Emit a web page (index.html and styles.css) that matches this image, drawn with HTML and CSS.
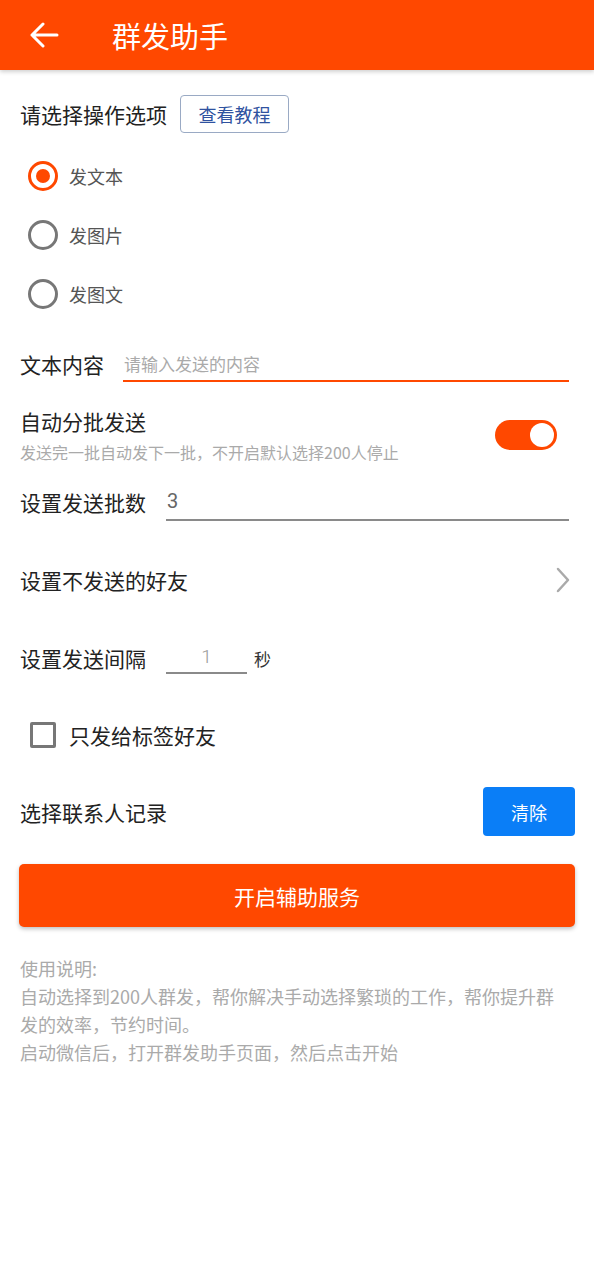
FILE: index.html
```html
<!DOCTYPE html>
<html lang="zh">
<head>
<meta charset="utf-8">
<link rel="stylesheet" href="styles.css">
</head>
<body>
<div class="header">
  <svg class="back" width="30" height="26" viewBox="0 0 30 26"><path d="M3 13 H28 M14 2 L3 13 L14 24" fill="none" stroke="#fff" stroke-width="3" stroke-linecap="round" stroke-linejoin="round"/></svg>
  <div class="title">群发助手</div>
</div>
<div class="content">
  <div class="row head-row">
    <div class="label">请选择操作选项</div>
    <div class="outline-btn">查看教程</div>
  </div>
  <div class="radios">
    <div class="radio-row"><span class="radio on"></span><span class="radio-label">发文本</span></div>
    <div class="radio-row"><span class="radio"></span><span class="radio-label">发图片</span></div>
    <div class="radio-row"><span class="radio"></span><span class="radio-label">发图文</span></div>
  </div>
  <div class="row text-row">
    <div class="label">文本内容</div>
    <div class="input focus"><span class="placeholder">请输入发送的内容</span></div>
  </div>
  <div class="batch-row">
    <div class="batch-text">
      <div class="label lh30">自动分批发送</div>
      <div class="sub">发送完一批自动发下一批，不开启默认选择200人停止</div>
    </div>
    <div class="toggle"><span class="thumb"></span></div>
  </div>
  <div class="row count-row">
    <div class="label">设置发送批数</div>
    <div class="input plain"><span class="value">3</span></div>
  </div>
  <div class="row friends-row">
    <div class="label">设置不发送的好友</div>
    <svg class="chev" width="14" height="26" viewBox="0 0 14 26"><path d="M2 2 L12 13 L2 24" fill="none" stroke="#aaa" stroke-width="2.5" stroke-linecap="round" stroke-linejoin="round"/></svg>
  </div>
  <div class="row interval-row">
    <div class="label">设置发送间隔</div>
    <div class="input small"><span class="value light">1</span></div>
    <div class="unit">秒</div>
  </div>
  <div class="row check-row">
    <span class="checkbox"></span>
    <span class="label">只发给标签好友</span>
  </div>
  <div class="row contact-row">
    <div class="label">选择联系人记录</div>
    <div class="blue-btn">清除</div>
  </div>
  <div class="big-btn">开启辅助服务</div>
  <div class="usage">
    <p>使用说明:</p>
    <p>自动选择到200人群发，帮你解决手动选择繁琐的工作，帮你提升群发的效率，节约时间。</p>
    <p>启动微信后，打开群发助手页面，然后点击开始</p>
  </div>
</div>
</body>
</html>
```
FILE: styles.css
```css
* { box-sizing: border-box; }
html, body { margin: 0; padding: 0; background: #fff; }
body {
  font-family: "Noto Sans CJK SC", "Noto Sans", Roboto, sans-serif;
  color: #222;
  width: 594px;
}
.header {
  height: 70px;
  background: #ff4800;
  display: flex;
  align-items: center;
  box-shadow: 0 2px 4px rgba(0,0,0,0.18);
  position: relative;
}
.back { margin-left: 29px; display: block; }
.title {
  color: #fff;
  font-size: 29px;
  margin-left: 53px;
  line-height: 40px;
}
.content { padding: 0 19px 0 20px; }
.row { display: flex; align-items: center; height: 48px; }
.label { font-size: 21px; line-height: 30px; color: #222; white-space: nowrap; }
.lh30 { line-height: 30px; }
.head-row { margin-top: 20px; }
.outline-btn {
  margin-left: 13px;
  width: 109px;
  height: 38px;
  border: 1px solid #9aaac4;
  border-radius: 4px;
  color: #2f52a0;
  font-size: 18px;
  display: flex;
  align-items: center;
  justify-content: center;
}
.radios { margin-top: 8px; }
.radio-row { height: 59px; display: flex; align-items: center; padding-left: 8px; }
.radio {
  width: 30px; height: 30px;
  border: 3px solid #777;
  border-radius: 50%;
  display: flex; align-items: center; justify-content: center;
}
.radio.on { border-color: #ff4800; }
.radio.on::after {
  content: "";
  width: 14px; height: 14px;
  border-radius: 50%;
  background: #ff4800;
}
.radio-label { margin-left: 11px; font-size: 18px; color: #555; }
.text-row { margin-top: 17px; }
.input {
  flex: 1;
  height: 36px;
  margin-left: 19px;
  margin-right: 6px;
  display: flex;
  align-items: center;
  padding-left: 1px;
}
.input.focus { border-bottom: 2px solid #ff4800; }
.input.plain { border-bottom: 2px solid #8a8a8a; margin-left: 20px; height: 38px; }
.placeholder { font-size: 17px; color: #aaa; }
.value { font-size: 20px; color: #666; font-family: Roboto, "Noto Sans CJK SC", sans-serif; }
.value.light { color: #999; font-size: 19px; font-weight: 300; }
.batch-row {
  margin-top: 18px;
  display: flex;
  align-items: center;
  justify-content: space-between;
}
.sub { margin-top: 5px; font-size: 16px; line-height: 22px; color: #aaa; white-space: nowrap; }
.toggle {
  width: 62px; height: 30px;
  border-radius: 15px;
  background: #ff4800;
  margin-right: 18px;
  display: flex;
  align-items: center;
  justify-content: flex-end;
  padding-right: 3px;
}
.thumb { width: 24px; height: 24px; border-radius: 50%; background: #fff; }
.count-row { margin-top: 15px; }
.friends-row { margin-top: 30px; justify-content: space-between; }
.chev { margin-right: 5px; display: block; }
.interval-row { margin-top: 30px; }
.input.small {
  flex: none;
  width: 81px;
  margin-left: 20px;
  margin-right: 0;
  border-bottom: 2px solid #8a8a8a;
  justify-content: center;
  height: 34px;
  margin-top: -2px;
  padding-left: 0;
}
.unit { margin-left: 7px; font-size: 17px; color: #333; }
.check-row { margin-top: 29px; padding-left: 10px; }
.checkbox {
  width: 26px; height: 26px;
  border: 3px solid #777;
  border-radius: 2px;
  margin-right: 13px;
}
.contact-row { margin-top: 28px; height: 49px; justify-content: space-between; }
.blue-btn {
  width: 92px; height: 49px;
  background: #0a7ef7;
  border-radius: 4px;
  color: #fff;
  font-size: 18px;
  display: flex; align-items: center; justify-content: center;
}
.big-btn {
  margin-top: 28px;
  margin-left: -1px;
  height: 63px;
  background: #ff4800;
  border-radius: 5px;
  color: #fff;
  font-size: 21px;
  display: flex; align-items: center; justify-content: center;
  box-shadow: 0 2px 4px rgba(0,0,0,0.25);
}
.usage { margin-top: 27px; padding-right: 10px; color: #aaa; font-size: 18px; line-height: 28px; }
.usage p { margin: 0; }
```
